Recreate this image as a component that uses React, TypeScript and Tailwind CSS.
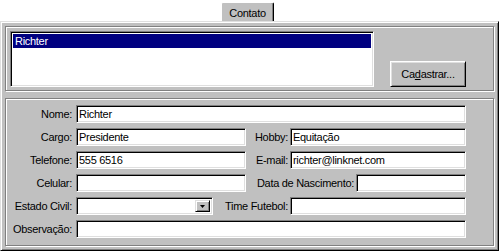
import React from "react";

const sunken =
  "bg-white border border-t-[#808080] border-l-[#808080] border-r-white border-b-white shadow-[inset_1px_1px_0_#000,inset_-1px_-1px_0_#dfdfdf]";

function Input({ className, text }: { className: string; text?: string }) {
  return (
    <div className={`${sunken} h-[18px] flex items-center pl-[2px] ${className}`}>
      <span className="leading-none text-black whitespace-nowrap">{text}</span>
    </div>
  );
}

function Label({ className, text }: { className: string; text: string }) {
  return <span className={`text-right whitespace-nowrap text-black leading-none ${className}`}>{text}</span>;
}

export default function App() {
  return (
    <div className="w-[499px] h-[251px] bg-white font-['Liberation_Sans',Arial,sans-serif] text-[11px] tracking-[-0.3px] flex flex-col overflow-hidden">
      {/* tab strip */}
      <div className="h-[21px] flex items-end">
        <div className="ml-[221px] w-[53px] h-[19px] bg-[#c0c0c0] border-t border-l border-r border-t-white border-l-white border-r-black rounded-t-[2px] shadow-[inset_-1px_0_0_#808080] flex items-center justify-center pt-[2px]">
          <span className="text-black leading-none">Contato</span>
        </div>
      </div>

      {/* main panel */}
      <div className="h-[230px] bg-[#c0c0c0] border border-t-[#dfdfdf] border-l-[#dfdfdf] border-r-black border-b-black shadow-[inset_1px_1px_0_#fff,inset_-1px_-1px_0_#808080] pt-[4px] pl-[4px]">
        {/* top frame */}
        <div className="w-[489px] h-[65px] border border-[#808080] shadow-[1px_1px_0_#fff,inset_1px_1px_0_#fff] flex items-end pl-[4px] pb-[3px]">
          <div className={`${sunken} w-[364px] h-[56px] p-[2px]`}>
            <div className="h-[14px] bg-[#000080] text-white flex items-center pl-[2px] leading-none">
              Richter
            </div>
          </div>
          <div className="ml-[16px] w-[76px] h-[26px] border border-t-white border-l-white border-r-black border-b-black shadow-[inset_1px_1px_0_#dfdfdf,inset_-1px_-1px_0_#808080] flex items-center justify-center">
            <span className="text-black leading-none">
              Ca<span className="underline">d</span>astrar...
            </span>
          </div>
        </div>

        {/* lower frame */}
        <div className="mt-[7px] w-[489px] h-[148px] border border-[#808080] shadow-[1px_1px_0_#fff,inset_1px_1px_0_#fff] pt-[6px] flex flex-col gap-[5px]">
          <div className="flex items-center h-[18px]">
            <Label className="w-[66px]" text="Nome:" />
            <Input className="ml-[4px] w-[390px]" text="Richter" />
          </div>
          <div className="flex items-center h-[18px]">
            <Label className="w-[66px]" text="Cargo:" />
            <Input className="ml-[4px] w-[170px]" text="Presidente" />
            <Label className="w-[42px]" text="Hobby:" />
            <Input className="ml-[2px] w-[176px]" text="Equitação" />
          </div>
          <div className="flex items-center h-[18px]">
            <Label className="w-[66px]" text="Telefone:" />
            <Input className="ml-[4px] w-[170px]" text="555 6516" />
            <Label className="w-[42px]" text="E-mail:" />
            <Input className="ml-[2px] w-[176px]" text="richter@linknet.com" />
          </div>
          <div className="flex items-center h-[18px]">
            <Label className="w-[66px]" text="Celular:" />
            <Input className="ml-[4px] w-[170px]" />
            <Label className="w-[108px]" text="Data de Nascimento:" />
            <Input className="ml-[2px] w-[110px]" />
          </div>
          <div className="flex items-center h-[18px]">
            <Label className="w-[66px]" text="Estado Civil:" />
            <div className={`${sunken} ml-[4px] w-[137px] h-[18px] p-[2px] flex justify-end`}>
              <div className="w-[15px] h-full bg-[#c0c0c0] border border-t-[#dfdfdf] border-l-[#dfdfdf] border-r-black border-b-black shadow-[inset_1px_1px_0_#fff,inset_-1px_-1px_0_#808080] flex items-center justify-center">
                <svg width="5" height="3" viewBox="0 0 5 3">
                  <path d="M0 0 H5 L2.5 3 Z" fill="#000" />
                </svg>
              </div>
            </div>
            <Label className="w-[75px]" text="Time Futebol:" />
            <Input className="ml-[2px] w-[176px]" />
          </div>
          <div className="flex items-center h-[18px]">
            <Label className="w-[66px]" text="Observação:" />
            <Input className="ml-[4px] w-[390px]" />
          </div>
        </div>
      </div>
    </div>
  );
}
